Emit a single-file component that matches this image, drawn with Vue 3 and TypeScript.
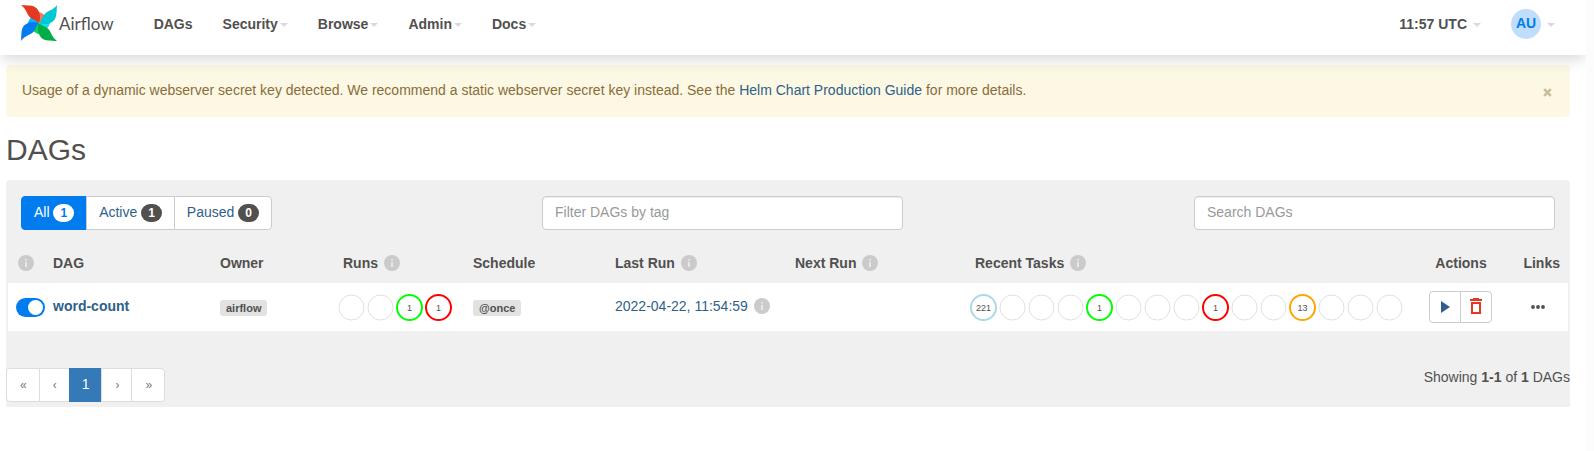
<script setup lang="ts">
import { ref } from 'vue'

interface Bubble { count?: number; color?: string }

const menus = ['Security', 'Browse', 'Admin', 'Docs']
const filters = [
  { label: 'All', count: 1 },
  { label: 'Active', count: 1 },
  { label: 'Paused', count: 0 },
]
const activeFilter = ref('All')
const enabled = ref(true)
const alertOpen = ref(true)

const blades = [
  { main: '#e43921', light: '#ff7557', turn: 0 },
  { main: '#00c7d4', light: '#11e1ee', turn: 90 },
  { main: '#00ad46', light: '#04d659', turn: 180 },
  { main: '#017cee', light: '#0cb6ff', turn: 270 },
]

const runs: Bubble[] = [{}, {}, { count: 1, color: 'lime' }, { count: 1, color: 'red' }]
const tasks: Bubble[] = [
  { count: 221, color: 'lightblue' }, {}, {}, {},
  { count: 1, color: 'lime' }, {}, {}, {},
  { count: 1, color: 'red' }, {}, {},
  { count: 13, color: 'orange' }, {}, {}, {},
]

const columns = [
  { key: 'toggle', label: '', info: true },
  { key: 'dag', label: 'DAG', info: false },
  { key: 'owner', label: 'Owner', info: false },
  { key: 'runs', label: 'Runs', info: true },
  { key: 'schedule', label: 'Schedule', info: false },
  { key: 'last', label: 'Last Run', info: true },
  { key: 'next', label: 'Next Run', info: true },
  { key: 'tasks', label: 'Recent Tasks', info: true },
  { key: 'actions', label: 'Actions', info: false },
  { key: 'links', label: 'Links', info: false },
]
const pages = ['«', '‹', '1', '›', '»']
</script>

<template>
  <div class="page">
    <nav class="navbar">
      <a class="brand" href="#">
        <svg class="pinwheel" viewBox="0 0 108 108" aria-hidden="true">
          <g v-for="b in blades" :key="b.turn" :transform="`rotate(${b.turn} 54 54)`">
            <path :fill="b.light" d="M52 20 C60 22 68 27 75 33 Q66 42 54 54 Z" />
          </g>
          <g v-for="b in blades" :key="b.main" :transform="`rotate(${b.turn} 54 54)`">
            <path :fill="b.main" d="M0 0 C18 2 36 -1 47 10 C57 21 60 38 54 54 C46 47 32 42 26 36 C17 27 17 13 0 0 Z" />
          </g>
        </svg>
        <span class="brand-name">Airflow</span>
      </a>
      <a class="nav-item" href="#">DAGs</a>
      <a v-for="m in menus" :key="m" class="nav-item" href="#">{{ m }}<i class="caret"></i></a>
      <button class="nav-item clock" type="button">11:57 UTC<i class="caret wide"></i></button>
      <button class="nav-item user" type="button"><span class="avatar">AU</span><i class="caret wide"></i></button>
    </nav>

    <main class="content">
      <div v-if="alertOpen" class="alert" role="alert">
        <p>Usage of a dynamic webserver secret key detected. We recommend a static webserver secret key instead. See the <a href="#">Helm Chart Production Guide</a> for more details.</p>
        <button type="button" class="close" aria-label="Close" @click="alertOpen = false">
          <svg viewBox="0 0 9 9" aria-hidden="true"><path d="M1.2 1.2 L7.8 7.8 M7.8 1.2 L1.2 7.8" /></svg>
        </button>
      </div>

      <h1>DAGs</h1>

      <section class="panel">
        <div class="filters">
          <div class="group">
            <button v-for="f in filters" :key="f.label" type="button" :class="{ on: activeFilter === f.label }" @click="activeFilter = f.label">
              {{ f.label }} <span class="badge">{{ f.count }}</span>
            </button>
          </div>
          <input class="field" type="text" placeholder="Filter DAGs by tag" aria-label="Filter DAGs by tag">
          <input class="field search" type="text" placeholder="Search DAGs" aria-label="Search DAGs">
        </div>

        <div class="table-wrap">
          <table>
            <colgroup><col v-for="c in columns" :key="c.key" :class="`col-${c.key}`"></colgroup>
            <thead>
              <tr>
                <th v-for="c in columns" :key="c.key" :class="`head-${c.key}`">
                  <span class="line">{{ c.label }}<svg v-if="c.info" class="info" viewBox="0 0 16 16" aria-hidden="true"><circle cx="8" cy="8" r="8" /><path d="M7.2 4h1.6v1.6H7.2zM7.2 7h1.6v5H7.2z" /></svg></span>
                </th>
              </tr>
            </thead>
            <tbody>
              <tr>
                <td class="toggle"><input v-model="enabled" class="switch" type="checkbox" aria-label="Enable word-count"></td>
                <td class="raised"><a class="dag-name" href="#">word-count</a></td>
                <td><a class="label" href="#">airflow</a></td>
                <td class="bubbles">
                  <div>
                    <svg v-for="(b, i) in runs" :key="i" viewBox="0 0 27 27">
                      <circle cx="13.5" cy="13.5" r="12.5" :stroke="b.color ?? '#e0e0e0'" :stroke-width="b.color ? 2 : 1" />
                      <text v-if="b.count" x="13.5" y="17">{{ b.count }}</text>
                    </svg>
                  </div>
                </td>
                <td><a class="label" href="#">@once</a></td>
                <td class="raised">
                  <span class="line"><a href="#">2022-04-22, 11:54:59</a><svg class="info" viewBox="0 0 16 16" aria-hidden="true"><circle cx="8" cy="8" r="8" /><path d="M7.2 4h1.6v1.6H7.2zM7.2 7h1.6v5H7.2z" /></svg></span>
                </td>
                <td></td>
                <td class="bubbles">
                  <div>
                    <svg v-for="(b, i) in tasks" :key="i" viewBox="0 0 27 27">
                      <circle cx="13.5" cy="13.5" r="12.5" :stroke="b.color ?? '#e0e0e0'" :stroke-width="b.color ? 2 : 1" />
                      <text v-if="b.count" x="13.5" y="17">{{ b.count }}</text>
                    </svg>
                  </div>
                </td>
                <td class="actions">
                  <div class="group small">
                    <button type="button" aria-label="Trigger DAG"><svg viewBox="0 0 18 18"><path fill="#2f5f8a" d="M5 3v12l9-6z" /></svg></button>
                    <button type="button" aria-label="Delete DAG"><svg viewBox="0 0 18 18"><path fill="#e43921" fill-rule="evenodd" d="M6 0h6v1h3v2H3V1h3zM4 4h10v12H4zM6 6v8h6V6z" /></svg></button>
                  </div>
                </td>
                <td class="links"><button class="more" type="button" aria-label="Links"><svg viewBox="0 0 14 4"><circle cx="2" cy="2" r="1.9" /><circle cx="7" cy="2" r="1.9" /><circle cx="12" cy="2" r="1.9" /></svg></button></td>
              </tr>
            </tbody>
          </table>
        </div>

        <footer class="foot">
          <ul class="pagination">
            <li v-for="p in pages" :key="p"><a href="#" :class="{ current: p === '1' }">{{ p }}</a></li>
          </ul>
          <p>Showing <strong>1-1</strong> of <strong>1</strong> DAGs</p>
        </footer>
      </section>
    </main>
  </div>
</template>

<style>
html { background: #fcfcfc; }
</style>

<style scoped>
.page {
  min-height: 100vh;
  margin-right: 8px;
  background: #fff;
  color: #51504f;
  font: 14px/20px "Liberation Sans", Arial, sans-serif;
  overflow: hidden;
}
.page *, .page *::before { box-sizing: border-box; }
a { color: #2f5f8a; text-decoration: none; }
button, input { font: inherit; }
button { cursor: pointer; }
p, h1, ul { margin: 0; padding: 0; }

.navbar {
  position: relative;
  z-index: 1;
  display: flex;
  align-items: center;
  height: 55px;
  padding: 0 16px 7px 21px;
  background: #fff;
  box-shadow: 0 6px 14px -2px rgba(0, 0, 0, 0.16);
}
.brand { display: flex; align-items: center; margin-right: 25px; color: #51504f; }
.pinwheel { width: 36px; height: 36px; margin: 0 2px 2px 0; overflow: visible; }
.brand-name { font: 17px/20px Lato, sans-serif; }
.nav-item {
  display: flex;
  align-items: center;
  padding: 0 15px;
  border: 0;
  background: none;
  color: #51504f;
  font-weight: bold;
}
.caret {
  margin: 2px 0 0 2px;
  border: 4px solid transparent;
  border-top-color: #e2d2e2;
  border-bottom: 0;
}
.caret.wide { margin-left: 6px; }
.clock { margin-left: auto; }
.avatar {
  width: 30px;
  height: 30px;
  border-radius: 50%;
  background: #c0defb;
  color: #017cee;
  line-height: 29px;
  text-align: center;
}

.content { padding: 10px 16px 44px 6px; }
.alert {
  display: flex;
  justify-content: space-between;
  align-items: center;
  padding: 14px 15px 16px;
  border: 1px solid #fcf8e3;
  border-radius: 4px;
  background: #fcf8e3;
  color: #8a6d3b;
}
.close { display: flex; padding: 2px; margin-top: 4px; border: 0; background: none; }
.close svg { width: 9px; height: 9px; stroke: #cabd9c; stroke-width: 2.6; }
h1 { margin: 16px 0 14px; font-weight: normal; font-size: 30px; line-height: 33px; }

.panel { border-radius: 4px 4px 0 0; background: #f0f0f0; padding-top: 16px; }
.filters {
  display: grid;
  grid-template-columns: 521fr 361fr 291fr 361fr;
  padding: 0 15px;
}
.group { display: flex; }
.group button {
  padding: 5px 12px 7px;
  margin-left: -1px;
  border: 1px solid #ccc;
  background: #fff;
  color: #2f5f8a;
}
.group button:first-child { margin-left: 0; border-radius: 4px 0 0 4px; }
.group button:last-child { border-radius: 0 4px 4px 0; }
.group button.on { border-color: #017cee; background: #017cee; color: #fff; }
.badge {
  display: inline-block;
  padding: 3px 7px;
  border-radius: 10px;
  background: #51504f;
  color: #fff;
  font-size: 12px;
  font-weight: bold;
  line-height: 12px;
}
.on .badge { background: #fff; color: #017cee; }
.field {
  width: 100%;
  height: 34px;
  padding: 5px 12px 7px;
  border: 1px solid #ccc;
  border-radius: 4px;
  background: #fff;
  box-shadow: inset 0 1px 1px rgba(0, 0, 0, 0.075);
}
.field::placeholder { color: #999; opacity: 1; }
.search { grid-column: 4; }

.table-wrap { padding: 13px 2px 0; }
table { width: 100%; table-layout: fixed; border-collapse: collapse; }
.col-toggle { width: 37px; }
.col-dag { width: 167px; }
.col-owner { width: 123px; }
.col-runs { width: 130px; }
.col-schedule { width: 142px; }
.col-last { width: 180px; }
.col-next { width: 180px; }
.col-tasks { width: 446px; }
.col-actions { width: 96px; }
.col-links { width: 59px; }
th, td { padding: 0 8px; text-align: left; white-space: nowrap; }
th { height: 40px; }
tbody tr { height: 48px; background: #fff; }
.line { display: flex; align-items: center; }
.info { width: 16px; height: 16px; margin-left: 6px; fill: #cbcbcb; }
.info path { fill: #efefef; }
.head-toggle .info { margin-left: 2px; }
.head-actions .line { justify-content: center; }
.head-links .line { justify-content: flex-end; }
.raised { padding-bottom: 2px; }
.toggle { padding-right: 0; }
.switch {
  display: block;
  position: relative;
  appearance: none;
  width: 29px;
  height: 19px;
  margin: 0;
  border-radius: 10px;
  background: #cbcbcb;
}
.switch::before {
  content: "";
  position: absolute;
  top: 2px;
  left: 2px;
  width: 15px;
  height: 15px;
  border-radius: 50%;
  background: #fff;
}
.switch:checked { background: #017cee; }
.switch:checked::before { left: 12px; }
.dag-name { font-weight: bold; }
.label {
  display: inline-block;
  margin-top: 2px;
  padding: 0 6px;
  border-radius: 3px;
  background: #e2e2e2;
  color: #51504f;
  font-size: 11px;
  font-weight: bold;
  line-height: 16px;
}
.bubbles { padding: 0 3px; }
.bubbles div { display: flex; gap: 2px; }
.bubbles svg { width: 27px; height: 27px; flex: none; }
.bubbles circle { fill: #fff; }
.bubbles text { fill: #51504f; font-size: 9px; text-anchor: middle; }
.actions, .links { padding: 0 1px 0 0; text-align: center; }
.small { justify-content: center; }
.group.small button { display: flex; padding: 6px; height: 32px; }
.small svg { width: 18px; height: 18px; }
.more { display: flex; margin: 0 auto; padding: 4px; border: 0; background: none; }
.more svg { width: 14px; height: 4px; fill: #51504f; }

.foot { display: flex; justify-content: space-between; padding: 36px 0 5px; }
.pagination { display: flex; margin-top: 1px; list-style: none; }
.pagination a {
  display: block;
  padding: 6px 12px 6px 13px;
  margin-left: -1px;
  border: 1px solid #ddd;
  background: #fff;
  color: #777;
  font-size: 12px;
}
.pagination li:first-child a { margin-left: 0; border-radius: 4px 0 0 4px; }
.pagination li:last-child a { border-radius: 0 4px 4px 0; }
.pagination .current {
  padding: 5px 12px 7px;
  border-color: #337ab7;
  background: #337ab7;
  color: #fff;
  font-size: 14px;
}
</style>
